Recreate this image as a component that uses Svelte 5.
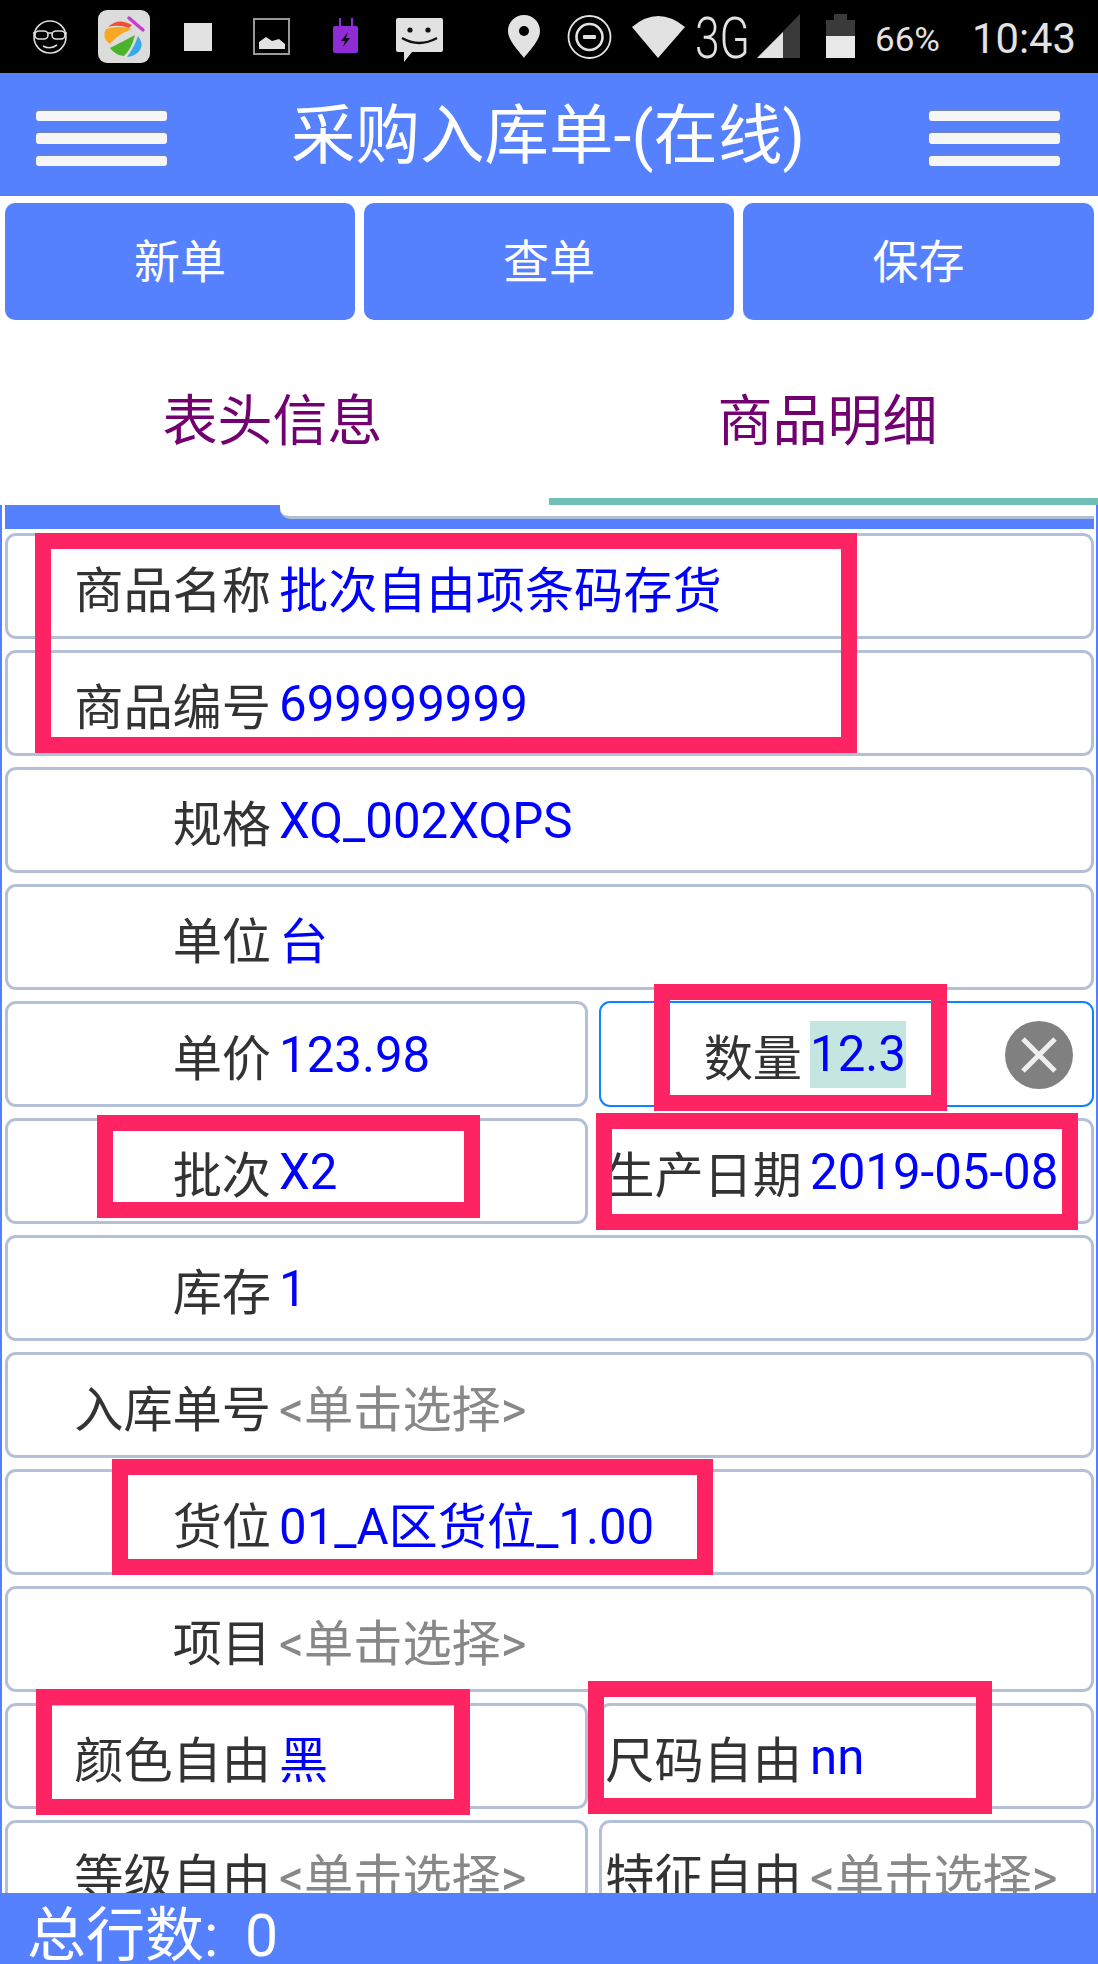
<script lang="ts">
	type Cell = { label: string; value?: string; focused?: boolean };

	const rows: Cell[][] = [
		[{ label: '商品名称', value: '批次自由项条码存货' }],
		[{ label: '商品编号', value: '699999999' }],
		[{ label: '规格', value: 'XQ_002XQPS' }],
		[{ label: '单位', value: '台' }],
		[{ label: '单价', value: '123.98' }, { label: '数量', value: '12.3', focused: true }],
		[{ label: '批次', value: 'X2' }, { label: '生产日期', value: '2019-05-08' }],
		[{ label: '库存', value: '1' }],
		[{ label: '入库单号' }],
		[{ label: '货位', value: '01_A区货位_1.00' }],
		[{ label: '项目' }],
		[{ label: '颜色自由', value: '黑' }, { label: '尺码自由', value: 'nn' }],
		[{ label: '等级自由' }, { label: '特征自由' }]
	];

	// red boxes someone drew on top of the screenshot
	const marks = [
		{ x: 35, y: 533, w: 822, h: 220 },
		{ x: 654, y: 984, w: 293, h: 127 },
		{ x: 97, y: 1115, w: 383, h: 103 },
		{ x: 596, y: 1113, w: 482, h: 117 },
		{ x: 112, y: 1459, w: 601, h: 116 },
		{ x: 36, y: 1689, w: 434, h: 126 },
		{ x: 588, y: 1681, w: 404, h: 133 }
	];
</script>

<div class="screen">
	<svg class="status" viewBox="0 0 1098 73" width="1098" height="73">
		<!-- face with sunglasses -->
		<g fill="none" stroke="#ddd" stroke-width="1.6">
			<circle cx="50" cy="37" r="16" />
			<path d="M33 33h34" />
			<rect x="35" y="31" width="13" height="8" rx="4" fill="#000" />
			<rect x="52" y="31" width="13" height="8" rx="4" fill="#000" />
			<path d="M43 46q7 4 14 -1" />
		</g>
		<!-- app icon -->
		<rect x="98" y="10" width="52" height="53" rx="9" fill="#dcdcdc" />
		<path d="M108 27Q118 17 132 25L129 28Q118 24 108 27Z" fill="#ee5038" />
		<path d="M129 18L143 30" stroke="#c63bd0" stroke-width="3.4" stroke-linecap="round" />
		<path d="M106 29Q118 25 132 29Q118 34 110 44Q101 38 106 29Z" fill="#f7a823" />
		<path d="M135 35Q131 50 124 56Q115 55 110 48Q122 42 135 35Z" fill="#4ab52a" />
		<path d="M138 36Q144 44 140 50Q136 56 127 57Q135 46 138 36Z" fill="#37a8ec" />
		<!-- stop square -->
		<rect x="184" y="23" width="28" height="28" fill="#e2e2e2" />
		<!-- picture -->
		<rect x="254" y="19" width="35" height="35" fill="none" stroke="#999" stroke-width="2" />
		<path d="M259 49V42L266 37L272 41L279 39L285 44V49Z" fill="#e2e2e2" />
		<!-- charger -->
		<path d="M340 18v9M352 18v9" stroke="#8e2dd6" stroke-width="2" />
		<rect x="333" y="26" width="25" height="27" rx="2" fill="#8e2dd6" />
		<path d="M348 32L341 41H345L343 47L350 38H346Z" fill="#111" />
		<!-- chat -->
		<path d="M398 18H441Q443 18 443 20V50Q443 52 441 52H412L404 62V52H398Q396 52 396 50V20Q396 18 398 18Z" fill="#e2e2e2" />
		<circle cx="410" cy="30" r="2.6" fill="#111" />
		<circle cx="428" cy="30" r="2.6" fill="#111" />
		<path d="M402 38Q419 48 437 38" fill="none" stroke="#111" stroke-width="2.4" />

		<!-- location -->
		<path d="M524 15C515 15 508 22 508 31C508 41 520 52 524 58C528 52 540 41 540 31C540 22 533 15 524 15Z" fill="#e2e2e2" />
		<circle cx="524" cy="31" r="5" fill="#000" />
		<!-- do not disturb -->
		<circle cx="589.5" cy="37" r="21" fill="none" stroke="#e2e2e2" stroke-width="1.8" />
		<circle cx="589.5" cy="37" r="13" fill="none" stroke="#e2e2e2" stroke-width="2.6" />
		<rect x="583" y="35" width="13" height="4" rx="1" fill="#e2e2e2" />
		<!-- wifi -->
		<path d="M658 58L632 27Q658 5 685 27Z" fill="#e2e2e2" />
		<text x="695" y="58" class="net" textLength="55" lengthAdjust="spacingAndGlyphs">3G</text>
		<!-- signal -->
		<path d="M757 58L800 14V58Z" fill="#3a3a3a" />
		<path d="M757 58L783 32V58Z" fill="#e2e2e2" />
		<!-- battery -->
		<path d="M834 14H847V20H855V36H826V20H834Z" fill="#3a3a3a" />
		<rect x="826" y="36" width="29" height="22" fill="#e8e8e8" />
		<text x="875" y="51" class="pct" textLength="65" lengthAdjust="spacingAndGlyphs">66%</text>
		<text x="972" y="53" class="time" textLength="104" lengthAdjust="spacingAndGlyphs">10:43</text>
	</svg>

	<header class="topbar">
		<div class="burger"><i></i><i></i><i></i></div>
		<h1>采购入库单-(在线)</h1>
		<div class="burger"><i></i><i></i><i></i></div>
	</header>

	<div class="actions">
		<button>新单</button>
		<button>查单</button>
		<button>保存</button>
	</div>

	<div class="tabs">
		<div class="tab">表头信息</div>
		<div class="tab active">商品明细</div>
	</div>

	<main class="panel">
		<div class="strip"><div class="strip-tab"></div></div>
		<div class="rows">
			{#each rows as row}
				<div class="row" class:split={row.length > 1}>
					{#each row as cell, i}
						<div class="cell" class:second={i === 1} class:focused={cell.focused}>
							<span class="label">{cell.label}</span>
							{#if cell.focused}
								<span class="value selected">{cell.value}</span>
								<svg class="clear" viewBox="0 0 68 68" width="68" height="68">
									<circle cx="34" cy="34" r="34" fill="#808080" />
									<path d="M18 18L50 50M50 18L18 50" stroke="#eee" stroke-width="5" />
								</svg>
							{:else if cell.value}
								<span class="value">{cell.value}</span>
							{:else}
								<span class="value empty">&lt;单击选择&gt;</span>
							{/if}
						</div>
					{/each}
				</div>
			{/each}
		</div>
	</main>

	<footer class="total">总行数: 0</footer>

	{#each marks as m}
		<div class="mark" style="left:{m.x}px;top:{m.y}px;width:{m.w}px;height:{m.h}px"></div>
	{/each}
</div>

<style>
	:global(body) {
		margin: 0;
		background: #fff;
	}

	.screen {
		position: relative;
		display: flex;
		flex-direction: column;
		width: 1098px;
		height: 1964px;
		overflow: hidden;
		font-family: Roboto, "Noto Sans CJK SC", sans-serif;
		background: #fff;
	}

	.status {
		display: block;
		flex-shrink: 0;
		background: #000;
	}

	.status text {
		font-family: Roboto, sans-serif;
		fill: #e2e2e2;
	}

	.status .net {
		font-size: 57px;
		font-weight: 300;
	}

	.status .pct {
		font-size: 34px;
	}

	.status .time {
		font-size: 42px;
	}

	.topbar {
		display: flex;
		align-items: center;
		justify-content: space-between;
		flex-shrink: 0;
		height: 123px;
		padding: 0 38px 0 36px;
		box-sizing: border-box;
		background: #5581ff;
	}

	.topbar h1 {
		margin: 4px 0 0;
		font-size: 64.5px;
		font-weight: 400;
		line-height: 1;
		color: #fff;
	}

	.burger {
		display: flex;
		flex-direction: column;
		gap: 12px;
		width: 131px;
		margin-top: 8px;
	}

	.burger i {
		display: block;
		height: 10.5px;
		border-radius: 3px;
		background: #f6f6f6;
		box-shadow: 0 -1px 2px #7f8594;
	}

	.actions {
		display: grid;
		grid-template-columns: 350px 370px 351px;
		gap: 9px;
		flex-shrink: 0;
		padding: 7px 4px 0 5px;
	}

	.actions button {
		height: 117px;
		padding: 0 0 7px;
		border: 0;
		border-radius: 10px;
		background: #5581ff;
		color: #fff;
		font: inherit;
		font-size: 46px;
	}

	.tabs {
		display: grid;
		grid-template-columns: 1fr 1fr;
		flex-shrink: 0;
		height: 185px;
	}

	.tab {
		display: flex;
		align-items: center;
		justify-content: center;
		padding: 6px 4px 0 0;
		box-sizing: border-box;
		font-size: 55px;
		color: #720070;
	}

	.tab.active {
		border-bottom: 7px solid #6fbfb4;
		padding: 13px 0 0 8px;
	}

	.panel {
		flex: 1;
		min-height: 0;
		overflow: hidden;
		padding: 0 4px 0 5px;
		box-shadow: inset 2px 0 0 #5581ff, inset -2px 0 0 #5581ff;
	}

	.strip {
		height: 24px;
		margin: 0 0 4px;
		background: #5581ff;
	}

	.strip-tab {
		height: 14px;
		margin-left: 275px;
		border-bottom: 3px solid #b0bdd6;
		border-bottom-left-radius: 10px;
		background: #fff;
		box-sizing: border-box;
	}

	.rows {
		display: flex;
		flex-direction: column;
		gap: 11px;
	}

	.row {
		display: grid;
		grid-template-columns: 1fr;
		height: 106px;
	}

	.row.split {
		grid-template-columns: 583px 495px;
		gap: 11px;
	}

	.cell {
		display: flex;
		align-items: center;
		min-width: 0;
		padding-top: 1px;
		border: 3px solid #b4c0d8;
		border-radius: 11px;
		box-sizing: border-box;
		font-size: 49.2px;
		white-space: nowrap;
	}

	.cell.focused {
		border: 2px solid #0a84ff;
		padding-left: 1px;
	}

	.label {
		flex-shrink: 0;
		width: 263px;
		text-align: right;
		color: #333;
	}

	.second .label {
		width: 200px;
	}

	.value {
		margin-left: 8px;
		color: #00f;
	}

	.value.empty {
		color: #888;
	}

	.value.selected {
		line-height: 67px;
		background: #c3e6e0;
	}

	.clear {
		margin-left: auto;
		margin-right: 19px;
	}

	.total {
		display: flex;
		align-items: center;
		flex-shrink: 0;
		height: 71px;
		padding: 3px 0 0 27px;
		box-sizing: border-box;
		background: #5581ff;
		color: #fff;
		font-size: 59px;
		word-spacing: 12px;
	}

	.mark {
		position: absolute;
		border: 16px solid #fe2464;
		box-sizing: border-box;
		pointer-events: none;
	}
</style>
